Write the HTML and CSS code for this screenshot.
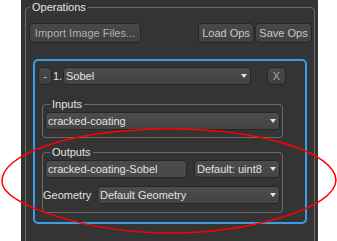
FILE: index.html
```html
<!DOCTYPE html>
<html>
<head>
<meta charset="utf-8">
<link rel="stylesheet" href="styles.css">
</head>
<body>
<div class="panel">
  <div class="group ops">
    <span class="legend">Operations</span>
    <div class="toolbar">
      <button class="btn import">Import Image Files...</button>
      <button class="btn load">Load Ops</button>
      <button class="btn save">Save Ops</button>
    </div>
    <div class="card">
      <div class="oprow">
        <button class="btn minus">-</button>
        <span class="num">1.</span>
        <div class="combo sobel"><span>Sobel</span><i class="arrow"></i></div>
        <button class="btn close">X</button>
      </div>
      <div class="group inner inputs">
        <span class="legend">Inputs</span>
        <div class="combo"><span>cracked-coating</span><i class="arrow"></i></div>
      </div>
      <div class="group inner outputs">
        <span class="legend">Outputs</span>
        <div class="row first">
          <div class="field">cracked-coating-Sobel</div>
          <div class="combo dtype"><span>Default: uint8</span><i class="arrow"></i></div>
        </div>
        <div class="row second">
          <span class="label">Geometry</span>
          <div class="combo geom"><span>Default Geometry</span><i class="arrow"></i></div>
        </div>
      </div>
    </div>
  </div>
</div>
<svg class="annot" width="337" height="241" viewBox="0 0 337 241">
  <path d="M2 182 C2 205 90 233 169 233 C250 233 336 208 336 180 A167 52 0 0 0 2 182 Z" fill="none" stroke="#ff0000" stroke-width="1.5"/>
</svg>
</body>
</html>
```
FILE: styles.css
```css
* { box-sizing: border-box; }
body {
  margin: 0;
  width: 337px;
  height: 241px;
  overflow: hidden;
  background: #ffffff;
  position: relative;
  font-family: "Liberation Sans", Arial, sans-serif;
  font-size: 11px;
  color: #dcdcdc;
}
.panel {
  margin-left: 21px;
  width: 297px;
  height: 241px;
  background: #343434;
  padding-top: 7px;
  overflow: hidden;
}
.group {
  border: 1px solid #6c6c6c;
  border-radius: 4px;
  display: flex;
  flex-direction: column;
}
.legend {
  align-self: flex-start;
  margin-top: -7px;
  height: 13px;
  line-height: 13px;
  padding: 0 2px;
  background: #343434;
  color: #e4e4e4;
  white-space: nowrap;
}
.ops {
  margin-left: 4px;
  width: 290px;
  height: 262px;
}
.ops > .legend { margin-left: 4px; }
.toolbar {
  display: flex;
  margin-top: 9px;
  padding: 0 2px 0 3px;
  gap: 1px;
}
.btn {
  height: 20px;
  border: 1px solid #262626;
  border-radius: 4px;
  background: linear-gradient(#484848, #404040);
  color: #c8c8c8;
  font: inherit;
  padding: 0;
  display: flex;
  align-items: center;
  justify-content: center;
}
.import { width: 112px; color: #b0b0b0; }
.load { margin-left: auto; width: 56px; }
.save { width: 57px; }
.card {
  margin: 16px 7px 0 7px;
  border: 2px solid #3a9de6;
  border-radius: 5px;
  padding: 6px 0 9px 0;
}
.oprow {
  display: flex;
  align-items: center;
  height: 18px;
}
.minus { width: 14px; height: 18px; margin-left: 3px; }
.num { margin-left: 1px; width: 10px; color: #e2e2e2; }
.combo {
  height: 18px;
  border: 1px solid #262626;
  border-radius: 4px;
  background: linear-gradient(#4c4c4c, #444444);
  display: flex;
  align-items: center;
  padding-left: 2px;
  color: #e2e2e2;
  white-space: nowrap;
}
.arrow {
  margin-left: auto;
  margin-right: 3px;
  width: 0;
  height: 0;
  border-left: 3.5px solid transparent;
  border-right: 3.5px solid transparent;
  border-top: 4px solid #e6e6e6;
}
.sobel { width: 188px; }
.close { width: 19px; height: 18px; margin-left: 16px; color: #9fa9bb; }
.inner {
  margin: 0 22px 0 7px;
  padding: 0 2px 7px 2px;
}
.inner > .legend { margin-left: 5px; }
.inputs { margin-top: 19px; }
.inputs > .combo { margin-top: 1px; }
.outputs { margin-top: 14px; padding-bottom: 8px; }
.row {
  display: flex;
  align-items: center;
  justify-content: space-between;
}
.row.first { margin-top: 1px; }
.row.second { margin-top: 8px; }
.field {
  width: 142px;
  height: 18px;
  border: 1px solid #262626;
  border-radius: 4px;
  background: #4a4a4a;
  display: flex;
  align-items: center;
  padding-left: 2px;
  color: #e2e2e2;
  white-space: nowrap;
}
.dtype { width: 86px; }
.label { margin-left: -2px; color: #e2e2e2; }
.geom { width: 183px; }
.annot {
  position: absolute;
  left: 0;
  top: 0;
  pointer-events: none;
}
```
